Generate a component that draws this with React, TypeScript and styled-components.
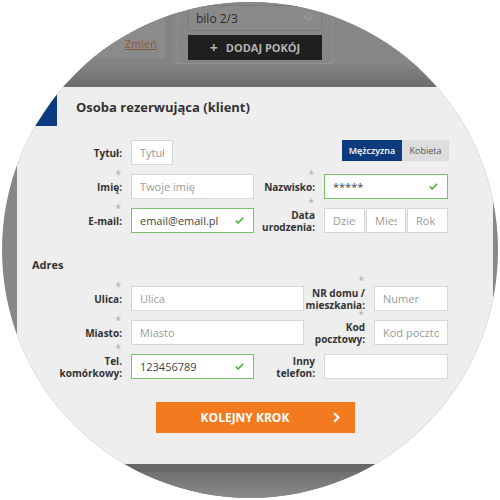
import React from "react";
import styled, { createGlobalStyle } from "styled-components";

const GlobalStyle = createGlobalStyle`
  html, body {
    margin: 0;
    padding: 0;
    background: #fff;
  }
  body {
    font-family: "Open Sans", "DejaVu Sans", sans-serif;
  }
  * {
    box-sizing: border-box;
  }
`;

function App() {
  return (
    <>
      <GlobalStyle />
      <Circle>
        <Backdrop>
          <SummaryBox>
            <SummaryInner>
              <ChangeLink>Zmień</ChangeLink>
            </SummaryInner>
          </SummaryBox>
          <RoomBox>
            <FakeSelect>
              <span>bilo 2/3</span>
              <svg width="11" height="6" viewBox="0 0 11 6">
                <polyline points="0.5,0.5 5.5,5 10.5,0.5" fill="none" stroke="#a8a8a8" strokeWidth="1" />
              </svg>
            </FakeSelect>
            <AddRoom>
              <span>+</span> DODAJ POKÓJ
            </AddRoom>
          </RoomBox>
        </Backdrop>

        <Panel>
          <Header>
            <svg width="22" height="33" viewBox="0 0 22 33">
              <polygon points="22,0 22,33 0,33" fill="#0c3a7e" />
            </svg>
            <Title>Osoba rezerwująca (klient)</Title>
          </Header>

          <Form>
            <Group>
              <Row>
                <Label $w={90}>Tytuł:</Label>
                <Field $w={42} placeholder="Tytuł" />
                <Toggle>
                  <Segment $active $w={60}>Mężczyzna</Segment>
                  <Segment $w={47}>Kobieta</Segment>
                </Toggle>
              </Row>
              <Row>
                <Label $w={90} $req>Imię:</Label>
                <Field $w={123} placeholder="Twoje imię" />
                <Label $w={61} $req>Nazwisko:</Label>
                <ValidField w={124} value="*****" />
              </Row>
              <Row>
                <Label $w={90} $req>E-mail:</Label>
                <ValidField w={123} value="email@email.pl" />
                <Label $w={61} $req>
                  Data
                  <br />
                  urodzenia:
                </Label>
                <DateGroup>
                  <Field $w={41} placeholder="Dzień" />
                  <Field $w={40} placeholder="Miesiąc" />
                  <Field $w={41} placeholder="Rok" />
                </DateGroup>
              </Row>
            </Group>

            <SectionTitle>Adres</SectionTitle>

            <Group>
              <Row>
                <Label $w={90} $req>Ulica:</Label>
                <Field $w={173} placeholder="Ulica" />
                <Label $w={61} $req>
                  NR domu /
                  <br />
                  mieszkania:
                </Label>
                <Field $w={74} placeholder="Numer" />
              </Row>
              <Row>
                <Label $w={90} $req>Miasto:</Label>
                <Field $w={173} placeholder="Miasto" />
                <Label $w={61} $req>
                  Kod
                  <br />
                  pocztowy:
                </Label>
                <Field $w={74} placeholder="Kod pocztowy" />
              </Row>
              <Row>
                <Label $w={90} $req>
                  Tel.
                  <br />
                  komórkowy:
                </Label>
                <ValidField w={123} value="123456789" />
                <Label $w={61}>
                  Inny
                  <br />
                  telefon:
                </Label>
                <Field $w={124} />
              </Row>
            </Group>
          </Form>

          <Footer>
            <NextButton>
              <NextText>KOLEJNY KROK</NextText>
              <svg width="7" height="11" viewBox="0 0 7 11">
                <polyline points="1.2,1.2 5.5,5.5 1.2,9.8" fill="none" stroke="#fff" strokeWidth="2.2" />
              </svg>
            </NextButton>
          </Footer>
        </Panel>

        <Bottom />
      </Circle>
    </>
  );
}

function ValidField({ w, value }: { w: number; value: string }) {
  return (
    <FieldWrap>
      <Field $w={w} $valid defaultValue={value} readOnly />
      <Check width="9" height="7" viewBox="0 0 9 7">
        <polyline points="0.8,3.6 3.2,5.8 8.2,0.8" fill="none" stroke="#4fae3f" strokeWidth="1.6" />
      </Check>
    </FieldWrap>
  );
}

const Circle = styled.div`
  width: 496px;
  height: 496px;
  margin: 2px;
  border-radius: 50%;
  overflow: hidden;
  display: flex;
  flex-direction: column;
  background: #878787;
`;

const Backdrop = styled.div`
  height: 85px;
  flex-shrink: 0;
  display: flex;
  align-items: flex-start;
  background: linear-gradient(to bottom, #888 0%, #868686 72%, #6b6b6b 100%);
`;

const SummaryBox = styled.div`
  width: 171px;
  height: 62px;
  background: #838383;
`;

const SummaryInner = styled.div`
  width: 163px;
  height: 56px;
  background: #8b8b8b;
  display: flex;
  justify-content: flex-end;
  align-items: flex-end;
  padding: 0 8px 7px 0;
`;

const ChangeLink = styled.span`
  font-size: 11px;
  line-height: 15px;
  color: #8e5a36;
  text-decoration: underline;
`;

const RoomBox = styled.div`
  margin-left: 4px;
  width: 156px;
  height: 62px;
  border: 1px dotted #9c9c9c;
  border-top: none;
  padding: 3px 10px 0;
  display: flex;
  flex-direction: column;
  gap: 4px;
`;

const FakeSelect = styled.div`
  height: 26px;
  border: 1px solid #7b7b7b;
  background: #8a8a8a;
  display: flex;
  align-items: center;
  justify-content: space-between;
  padding: 0 7px 0 7px;
  font-size: 12px;
  color: #2c2c2c;
`;

const AddRoom = styled.div`
  height: 25px;
  background: #1f1f1f;
  color: #b4b4b4;
  font-size: 11px;
  font-weight: 700;
  display: flex;
  align-items: center;
  justify-content: center;
  gap: 4px;

  span {
    font-size: 14px;
    margin-right: 4px;
  }
`;

const Panel = styled.div`
  margin-left: 15px;
  width: 476px;
  height: 377px;
  flex-shrink: 0;
  background: #eeeeee;
  display: flex;
  flex-direction: column;
`;

const Header = styled.div`
  display: flex;
  align-items: flex-start;
  padding: 6px 0 0 18px;

  svg {
    display: block;
  }
`;

const Title = styled.h2`
  margin: 5px 0 0 19px;
  font-size: 13px;
  line-height: 18px;
  font-weight: 700;
  color: #333;
`;

const Form = styled.div`
  padding: 14px 0 0 15px;
  display: flex;
  flex-direction: column;
`;

const Group = styled.div`
  display: flex;
  flex-direction: column;
  gap: 9px;
`;

const Row = styled.div`
  display: flex;
  align-items: center;
  height: 25px;
  width: 417px;
`;

const Label = styled.label<{ $w: number; $req?: boolean }>`
  position: relative;
  width: ${(p) => p.$w}px;
  margin-right: 9px;
  flex-shrink: 0;
  text-align: right;
  font-size: 10px;
  line-height: 12px;
  font-weight: 700;
  color: #333;
  white-space: nowrap;

  &::before {
    content: ${(p) => (p.$req ? '"*"' : "none")};
    position: absolute;
    right: 1px;
    top: -11px;
    font-size: 10px;
    line-height: 9px;
    font-weight: 400;
    color: #a9a9a9;
  }
`;

const Field = styled.input<{ $w: number; $valid?: boolean }>`
  width: ${(p) => p.$w}px;
  height: 25px;
  flex-shrink: 0;
  margin: 0;
  padding: 0 8px;
  border: 1px solid ${(p) => (p.$valid ? "#79c16b" : "#d6d6d6")};
  border-radius: 0;
  background: #fff;
  font-family: "Open Sans", "DejaVu Sans", sans-serif;
  font-size: 11px;
  color: #444;
  outline: none;

  &::placeholder {
    color: #9a9a9a;
  }
`;

const FieldWrap = styled.div`
  position: relative;
  display: flex;
`;

const Check = styled.svg`
  position: absolute;
  right: 10px;
  top: 9px;
`;

const Toggle = styled.div`
  margin-left: auto;
  align-self: flex-start;
  display: flex;
`;

const Segment = styled.div<{ $active?: boolean; $w: number }>`
  width: ${(p) => p.$w}px;
  height: 21px;
  display: flex;
  align-items: center;
  justify-content: center;
  font-size: 9px;
  font-weight: ${(p) => (p.$active ? 600 : 400)};
  background: ${(p) => (p.$active ? "#0c3a7e" : "#dddddd")};
  color: ${(p) => (p.$active ? "#fff" : "#555")};
`;

const DateGroup = styled.div`
  display: flex;
  gap: 1px;
`;

const SectionTitle = styled.h3`
  margin: 23px 0 12px 0;
  font-size: 11px;
  line-height: 18px;
  font-weight: 700;
  color: #333;
`;

const Footer = styled.div`
  display: flex;
  justify-content: center;
  margin-top: 23px;
`;

const NextButton = styled.button`
  width: 199px;
  height: 31px;
  border: none;
  border-radius: 0;
  background: #f47a20;
  display: flex;
  align-items: center;
  padding: 0 15px;
  cursor: pointer;
`;

const NextText = styled.span`
  flex: 1;
  text-align: center;
  margin-right: 13px;
  font-family: "Open Sans", "DejaVu Sans", sans-serif;
  font-size: 12px;
  font-weight: 700;
  color: #fff;
`;

const Bottom = styled.div`
  flex: 1;
  background: linear-gradient(to bottom, #666 0, #6a6a6a 6px, #5f5f5f 7px, #707070 8px, #8b8b8b 100%);
`;

export default App;
